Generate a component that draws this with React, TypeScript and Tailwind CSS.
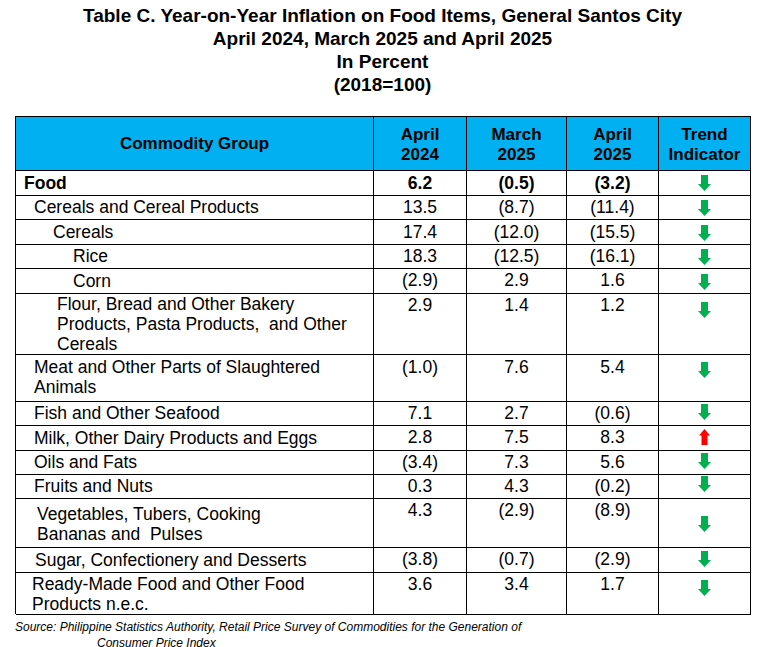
import React from 'react'

type Row = {
  label: React.ReactNode
  pl: string
  bold?: boolean
  values: string[]
  trend: 'down' | 'up'
  h: string
  labelPt: string
  valuePt: string
  arrowPt: string
}

const rows: Row[] = [
  { label: 'Food', pl: 'pl-[8px]', bold: true, values: ['6.2', '(0.5)', '(3.2)'], trend: 'down', h: 'h-[25px]', labelPt: 'pt-[2px]', valuePt: 'pt-[2px]', arrowPt: 'pt-[4px]' },
  { label: 'Cereals and Cereal Products', pl: 'pl-[18px]', values: ['13.5', '(8.7)', '(11.4)'], trend: 'down', h: 'h-[24px]', labelPt: 'pt-[1px]', valuePt: 'pt-[1px]', arrowPt: 'pt-[4px]' },
  { label: 'Cereals', pl: 'pl-[37px]', values: ['17.4', '(12.0)', '(15.5)'], trend: 'down', h: 'h-[25px]', labelPt: 'pt-[2px]', valuePt: 'pt-[2px]', arrowPt: 'pt-[5px]' },
  { label: 'Rice', pl: 'pl-[57px]', values: ['18.3', '(12.5)', '(16.1)'], trend: 'down', h: 'h-[24px]', labelPt: 'pt-[1px]', valuePt: 'pt-[1px]', arrowPt: 'pt-[4px]' },
  { label: 'Corn', pl: 'pl-[57px]', values: ['(2.9)', '2.9', '1.6'], trend: 'down', h: 'h-[25px]', labelPt: 'pt-[2px]', valuePt: 'pt-[1px]', arrowPt: 'pt-[5px]' },
  {
    label: (
      <>
        Flour, Bread and Other Bakery
        <br />
        Products, Pasta Products,{'\u00a0'} and Other
        <br />
        Cereals
      </>
    ),
    pl: 'pl-[41px]', values: ['2.9', '1.4', '1.2'], trend: 'down', h: 'h-[61px]', labelPt: 'pt-0', valuePt: 'pt-[1px]', arrowPt: 'pt-[8px]',
  },
  {
    label: (
      <>
        Meat and Other Parts of Slaughtered
        <br />
        Animals
      </>
    ),
    pl: 'pl-[18px]', values: ['(1.0)', '7.6', '5.4'], trend: 'down', h: 'h-[47px]', labelPt: 'pt-[2px]', valuePt: 'pt-[2px]', arrowPt: 'pt-[7px]',
  },
  { label: 'Fish and Other Seafood', pl: 'pl-[18px]', values: ['7.1', '2.7', '(0.6)'], trend: 'down', h: 'h-[24px]', labelPt: 'pt-[1px]', valuePt: 'pt-[1px]', arrowPt: 'pt-[2px]' },
  { label: 'Milk, Other Dairy Products and Eggs', pl: 'pl-[18px]', values: ['2.8', '7.5', '8.3'], trend: 'up', h: 'h-[25px]', labelPt: 'pt-[2px]', valuePt: 'pt-[1px]', arrowPt: 'pt-[3px]' },
  { label: 'Oils and Fats', pl: 'pl-[18px]', values: ['(3.4)', '7.3', '5.6'], trend: 'down', h: 'h-[24px]', labelPt: 'pt-[1px]', valuePt: 'pt-[1px]', arrowPt: 'pt-[2px]' },
  { label: 'Fruits and Nuts', pl: 'pl-[18px]', values: ['0.3', '4.3', '(0.2)'], trend: 'down', h: 'h-[24px]', labelPt: 'pt-[1px]', valuePt: 'pt-[1px]', arrowPt: 'pt-[1px]' },
  {
    label: (
      <>
        Vegetables, Tubers, Cooking
        <br />
        Bananas and{'\u00a0'} Pulses
      </>
    ),
    pl: 'pl-[21px]', values: ['4.3', '(2.9)', '(8.9)'], trend: 'down', h: 'h-[49px]', labelPt: 'pt-[5px]', valuePt: 'pt-[1px]', arrowPt: 'pt-[17px]',
  },
  { label: 'Sugar, Confectionery and Desserts', pl: 'pl-[19px]', values: ['(3.8)', '(0.7)', '(2.9)'], trend: 'down', h: 'h-[25px]', labelPt: 'pt-[2px]', valuePt: 'pt-[1px]', arrowPt: 'pt-[3px]' },
  {
    label: (
      <>
        Ready-Made Food and Other Food
        <br />
        Products n.e.c.
      </>
    ),
    pl: 'pl-[16px]', values: ['3.6', '3.4', '1.7'], trend: 'down', h: 'h-[41px]', labelPt: 'pt-[1px]', valuePt: 'pt-[1px]', arrowPt: 'pt-[7px]',
  },
]

function Arrow({ dir }: { dir: 'down' | 'up' }) {
  if (dir === 'up') {
    return (
      <svg width="11" height="16" viewBox="0 0 11 16" className="block">
        <path d="M5.5 0 L11 6.5 L8.5 6.5 L8.5 16 L2.5 16 L2.5 6.5 L0 6.5 Z" fill="#ff0000" />
      </svg>
    )
  }
  return (
    <svg width="13" height="16" viewBox="0 0 13 16" className="block">
      <path d="M3 0 L10 0 L10 9 L13 9 L6.5 16 L0 9 L3 9 Z" fill="#00b050" />
    </svg>
  )
}

export default function App() {
  return (
    <div className="w-[765px] h-[647px] bg-white text-black overflow-hidden font-['Liberation_Sans',Arial,sans-serif]">
      {/* titulo */}
      <div className="pt-[4px] text-center font-bold text-[19px] leading-[23px]">
        <p>Table C. Year-on-Year Inflation on Food Items, General Santos City</p>
        <p>April 2024, March 2025 and April 2025</p>
        <p>In Percent</p>
        <p>(2018=100)</p>
      </div>

      {/* tabla */}
      <div className="mt-[20px] ml-[15px] w-[736px] border-l border-t border-black">
        <div className="grid grid-cols-[358px_93px_100px_92px_92px] h-[54px] bg-[#00b0f0] font-bold text-[17px] leading-[20px]">
          <div className="border-r border-b border-black flex items-center justify-center pt-[1px]">Commodity Group</div>
          <div className="border-r border-b border-black flex items-center justify-center text-center pt-[3px]">April<br />2024</div>
          <div className="border-r border-b border-black flex items-center justify-center text-center pt-[3px]">March<br />2025</div>
          <div className="border-r border-b border-black flex items-center justify-center text-center pt-[3px]">April<br />2025</div>
          <div className="border-r border-b border-black flex items-center justify-center text-center pt-[3px]">Trend<br />Indicator</div>
        </div>

        {rows.map((row, idx) => (
          <div key={idx} className={`grid grid-cols-[358px_93px_100px_92px_92px] text-[17.5px] leading-[20px] ${row.h} ${row.bold ? 'font-bold' : ''}`}>
            <div className={`border-r border-b border-black ${row.pl} ${row.labelPt}`}>{row.label}</div>
            {row.values.map((v, i) => (
              <div key={i} className={`border-r border-b border-black text-center ${row.valuePt}`}>{v}</div>
            ))}
            <div className={`border-r border-b border-black flex justify-center ${row.arrowPt}`}>
              <Arrow dir={row.trend} />
            </div>
          </div>
        ))}
      </div>

      {/* fuente */}
      <div className="mt-[3px] pl-[15px] italic text-[12px] leading-[20px]">
        <p>Source: Philippine Statistics Authority, Retail Price Survey of Commodities for the Generation of</p>
        <p className="pl-[82px] -mt-[4px]">Consumer Price Index</p>
      </div>
    </div>
  )
}
